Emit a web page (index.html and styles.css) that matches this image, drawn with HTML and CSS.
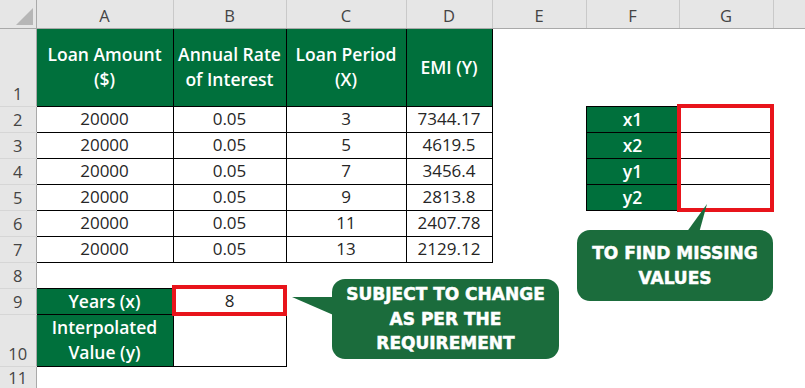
FILE: index.html
```html
<!DOCTYPE html>
<html>
<head>
<meta charset="utf-8">
<link rel="stylesheet" href="styles.css">
</head>
<body>
<div class="sheet">
  <table class="grid">
    <colgroup>
      <col class="c-rh"><col class="c-a"><col class="c-b"><col class="c-c"><col class="c-d"><col class="c-e"><col class="c-f"><col class="c-g"><col class="c-h">
    </colgroup>
    <tr class="r-head">
      <th class="corner"><div class="tri"></div></th>
      <th class="ch">A</th><th class="ch">B</th><th class="ch">C</th><th class="ch">D</th><th class="ch">E</th><th class="ch">F</th><th class="ch">G</th><th class="ch"></th>
    </tr>
    <tr class="r-tall">
      <th class="rn">1</th>
      <td class="b hd two">Loan Amount<br>($)</td>
      <td class="b hd two">Annual Rate<br>of Interest</td>
      <td class="b hd two">Loan Period<br>(X)</td>
      <td class="b hd">EMI (Y)</td>
      <td></td><td></td><td></td><td></td>
    </tr>
    <tr class="r-std">
      <th class="rn">2</th>
      <td class="b">20000</td><td class="b">0.05</td><td class="b">3</td><td class="b">7344.17</td>
      <td></td><td class="b hd">x1</td><td class="b"></td><td></td>
    </tr>
    <tr class="r-std">
      <th class="rn">3</th>
      <td class="b">20000</td><td class="b">0.05</td><td class="b">5</td><td class="b">4619.5</td>
      <td></td><td class="b hd">x2</td><td class="b"></td><td></td>
    </tr>
    <tr class="r-std">
      <th class="rn">4</th>
      <td class="b">20000</td><td class="b">0.05</td><td class="b">7</td><td class="b">3456.4</td>
      <td></td><td class="b hd">y1</td><td class="b"></td><td></td>
    </tr>
    <tr class="r-std">
      <th class="rn">5</th>
      <td class="b">20000</td><td class="b">0.05</td><td class="b">9</td><td class="b">2813.8</td>
      <td></td><td class="b hd">y2</td><td class="b"></td><td></td>
    </tr>
    <tr class="r-std">
      <th class="rn">6</th>
      <td class="b">20000</td><td class="b">0.05</td><td class="b">11</td><td class="b">2407.78</td>
      <td></td><td></td><td></td><td></td>
    </tr>
    <tr class="r-std">
      <th class="rn">7</th>
      <td class="b">20000</td><td class="b">0.05</td><td class="b">13</td><td class="b">2129.12</td>
      <td></td><td></td><td></td><td></td>
    </tr>
    <tr class="r-std">
      <th class="rn">8</th>
      <td></td><td></td><td></td><td></td><td></td><td></td><td></td><td></td>
    </tr>
    <tr class="r-std">
      <th class="rn">9</th>
      <td class="b hd">Years (x)</td><td class="b">8</td>
      <td></td><td></td><td></td><td></td><td></td><td></td>
    </tr>
    <tr class="r-tall2">
      <th class="rn">10</th>
      <td class="b hd two">Interpolated<br>Value (y)</td><td class="b"></td>
      <td></td><td></td><td></td><td></td><td></td><td></td>
    </tr>
    <tr class="r-last">
      <th class="rn rn-last">11</th>
      <td></td><td></td><td></td><td></td><td></td><td></td><td></td><td></td>
    </tr>
  </table>

  <div class="redbox rb-g"></div>
  <div class="redbox rb-b"></div>

  <svg class="wedges" width="805" height="388" viewBox="0 0 805 388">
    <polygon points="292,297 338,297 338,317" fill="#1b6c3c"/>
    <polygon points="707,204 686,233 699,233" fill="#1b6c3c"/>
  </svg>

  <div class="callout co-1">SUBJECT TO CHANGE<br>AS PER THE<br>REQUIREMENT</div>
  <div class="callout co-2">TO FIND MISSING<br>VALUES</div>
</div>
</body>
</html>
```

FILE: styles.css
```css
html, body {
  margin: 0;
  padding: 0;
  background: #ffffff;
  overflow: hidden;
}

.sheet {
  position: relative;
  width: 805px;
  height: 388px;
  overflow: hidden;
  font-family: "Open Sans", "Liberation Sans", sans-serif;
}

.grid {
  border-collapse: collapse;
  table-layout: fixed;
  width: 805px;
}

.c-rh { width: 36px; }
.c-a { width: 137px; }
.c-b { width: 113px; }
.c-c { width: 120px; }
.c-d { width: 86px; }
.c-e { width: 94px; }
.c-f { width: 93px; }
.c-g { width: 94px; }
.c-h { width: 32px; }

.r-head { height: 28px; }
.r-tall { height: 78px; }
.r-std { height: 26px; }
.r-tall2 { height: 52px; }
.r-last { height: 22px; }

.corner {
  background: #e6e6e6;
  border-right: 1px solid #a9a9a9;
  border-bottom: 1px solid #a9a9a9;
  padding: 8px 0 0 0;
  vertical-align: top;
}

.tri {
  width: 17px;
  height: 17px;
  margin-left: 16px;
  background: #b6b6b6;
  clip-path: polygon(100% 0, 100% 100%, 0 100%);
}

.ch {
  background: #e6e6e6;
  color: #444444;
  font-weight: 400;
  font-size: 16.5px;
  line-height: 20px;
  padding: 5px 0 0 0;
  text-align: center;
  border-right: 1px solid #c9c9c9;
  border-bottom: 1px solid #a9a9a9;
}

.rn {
  background: #e6e6e6;
  color: #444444;
  font-weight: 400;
  font-size: 16.5px;
  line-height: 22px;
  padding: 0 0 1px 0;
  text-align: center;
  vertical-align: bottom;
  border-right: 1px solid #a9a9a9;
  border-bottom: 1px solid #d6d6d6;
}

.rn-last {
  vertical-align: top;
  line-height: 20px;
  padding: 1px 0 0 0;
  border-bottom: none;
}

td {
  padding: 0;
  text-align: center;
  vertical-align: middle;
  font-size: 17px;
  line-height: 22px;
  color: #262626;
  white-space: nowrap;
  overflow: hidden;
}

td.two {
  line-height: 25px;
}

td.b {
  border: 1px solid #000000;
}

td.hd {
  background: #00703c;
  color: #ffffff;
  font-weight: 600;
  font-size: 17.5px;
}

.redbox {
  position: absolute;
  box-sizing: border-box;
  border: 4px solid #e8141b;
}

.rb-g {
  left: 677px;
  top: 104px;
  width: 97px;
  height: 108px;
}

.rb-b {
  left: 172px;
  top: 285px;
  width: 115px;
  height: 31px;
}

.wedges {
  position: absolute;
  left: 0;
  top: 0;
  pointer-events: none;
}

.callout {
  position: absolute;
  box-sizing: border-box;
  display: flex;
  align-items: center;
  justify-content: center;
  text-align: center;
  background: #1b6c3c;
  color: #ffffff;
  border-radius: 13px;
  font-family: "DejaVu Sans", "Liberation Sans", sans-serif;
  font-weight: 700;
  font-size: 17px;
  line-height: 24.5px;
  -webkit-text-stroke: 0.5px #ffffff;
}

.co-1 {
  left: 332px;
  top: 279px;
  width: 227px;
  height: 80px;
}

.co-2 {
  left: 577px;
  top: 230px;
  width: 196px;
  height: 71px;
}
```
